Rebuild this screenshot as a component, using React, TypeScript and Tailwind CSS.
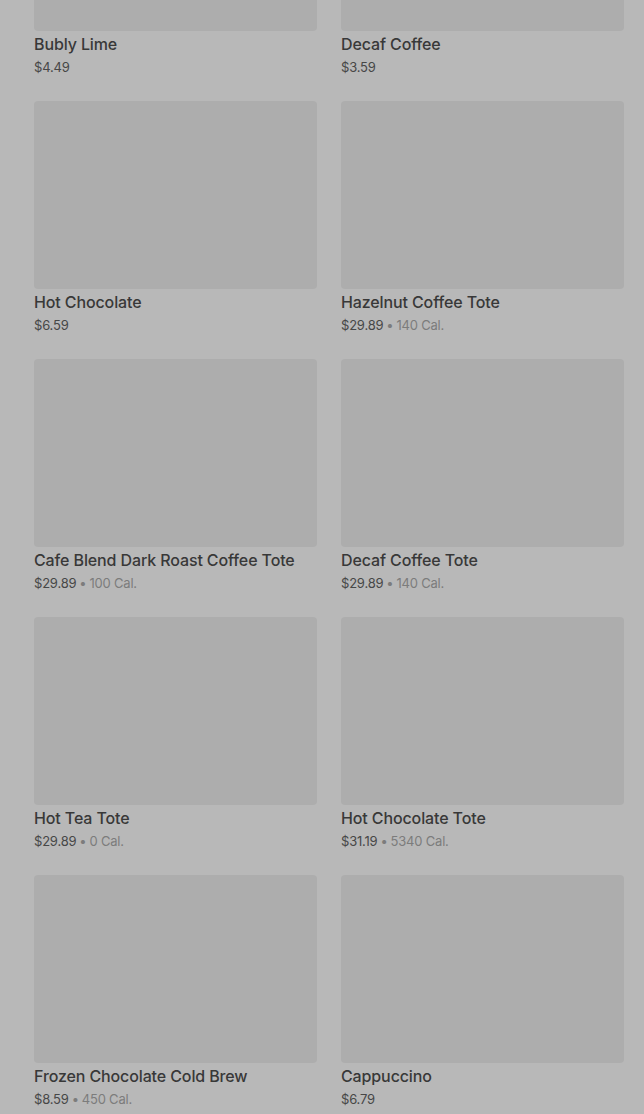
const ITEMS = [
  { name: "Bubly Lime", price: "$4.49" },
  { name: "Decaf Coffee", price: "$3.59" },
  { name: "Hot Chocolate", price: "$6.59" },
  { name: "Hazelnut Coffee Tote", price: "$29.89", cal: "140 Cal." },
  { name: "Cafe Blend Dark Roast Coffee Tote", price: "$29.89", cal: "100 Cal." },
  { name: "Decaf Coffee Tote", price: "$29.89", cal: "140 Cal." },
  { name: "Hot Tea Tote", price: "$29.89", cal: "0 Cal." },
  { name: "Hot Chocolate Tote", price: "$31.19", cal: "5340 Cal." },
  { name: "Frozen Chocolate Cold Brew", price: "$8.59", cal: "450 Cal." },
  { name: "Cappuccino", price: "$6.79" },
];

function MenuItem({ name, price, cal }: { name: string; price: string; cal?: string }) {
  return (
    <div className="flex flex-col">
      <div className="h-[188px] w-full rounded-[4px] bg-[#adadad]" />
      <div className="mt-[2px] text-[16px] leading-[22px] font-medium tracking-[-0.12px] text-[#383838]">
        {name}
      </div>
      <div className="mt-[2px] mb-[24px] flex items-center text-[13px] leading-[20px] tracking-[-0.2px] text-[#474747]">
        <span>{price}</span>
        {cal && (
          <>
            <span className="mx-[3px] text-[#7c7c7c]">•</span>
            <span className="text-[#7c7c7c]">{cal}</span>
          </>
        )}
      </div>
    </div>
  );
}

export default function App() {
  return (
    <div
      className="h-[1114px] w-full overflow-hidden bg-[#b8b8b8]"
      style={{ fontFamily: "Inter, 'Noto Sans', sans-serif" }}
    >
      <div className="-mt-[157px] grid grid-cols-2 gap-x-6 pl-[34px] pr-[20px]">
        {ITEMS.map((item) => (
          <MenuItem key={item.name} name={item.name} price={item.price} cal={item.cal} />
        ))}
      </div>
    </div>
  );
}
